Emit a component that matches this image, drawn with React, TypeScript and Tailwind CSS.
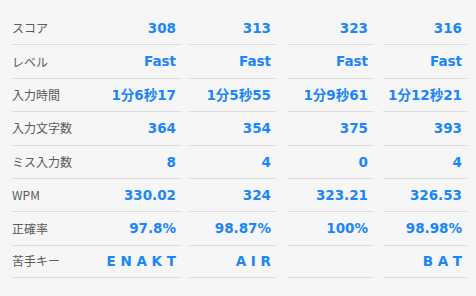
import React from 'react';

interface Result {
    score: string;
    level: string;
    time: string;
    chars: string;
    miss: string;
    wpm: string;
    accuracy: string;
    weak: string;
}

const labels = ['スコア', 'レベル', '入力時間', '入力文字数', 'ミス入力数', 'WPM', '正確率', '苦手キー'];

const results: Result[] = [
    { score: '308', level: 'Fast', time: '1分6秒17', chars: '364', miss: '8', wpm: '330.02', accuracy: '97.8%', weak: 'E N A K T' },
    { score: '313', level: 'Fast', time: '1分5秒55', chars: '354', miss: '4', wpm: '324', accuracy: '98.87%', weak: 'A I R' },
    { score: '323', level: 'Fast', time: '1分9秒61', chars: '375', miss: '0', wpm: '323.21', accuracy: '100%', weak: '' },
    { score: '316', level: 'Fast', time: '1分12秒21', chars: '393', miss: '4', wpm: '326.53', accuracy: '98.98%', weak: 'B A T' },
];

const widths = ['w-[169px]', 'w-[87px]', 'w-[85px]', 'w-[84px]'];

const valueFont = { fontFamily: '"DejaVu Sans", "Noto Sans CJK JP", sans-serif' };

const ResultColumn: React.FC<{ result: Result; index: number }> = ({ result, index }) => {
    const values = [result.score, result.level, result.time, result.chars, result.miss, result.wpm, result.accuracy, result.weak];
    return (
        <div className={`${widths[index]} flex flex-col shrink-0`}>
            {values.map((v, i) => (
                <div
                    key={i}
                    className={`h-[33.4px] flex items-center justify-between pr-[5px] ${i > 0 ? 'border-t' : ''} ${i === values.length - 1 ? 'border-b' : ''} border-[#dcdcdc]`}
                >
                    {index === 0 ? (
                        <span className="text-[12px] text-[#5a5a5a]" style={{ fontFamily: '"Noto Sans CJK JP", sans-serif' }}>
                            {labels[i]}
                        </span>
                    ) : (
                        <span />
                    )}
                    <span className="text-[13.5px] font-bold text-[#1a86f8] whitespace-pre" style={valueFont}>
                        {v}
                    </span>
                </div>
            ))}
        </div>
    );
};

export default function App() {
    return (
        <div className="w-[476px] h-[296px] bg-[#f6f6f6] overflow-hidden">
            <div className="flex pl-[12px] pt-[11px]">
                <ResultColumn result={results[0]} index={0} />
                <div className="ml-[8px]"><ResultColumn result={results[1]} index={1} /></div>
                <div className="ml-[12px]"><ResultColumn result={results[2]} index={2} /></div>
                <div className="ml-[10px]"><ResultColumn result={results[3]} index={3} /></div>
            </div>
        </div>
    );
}
